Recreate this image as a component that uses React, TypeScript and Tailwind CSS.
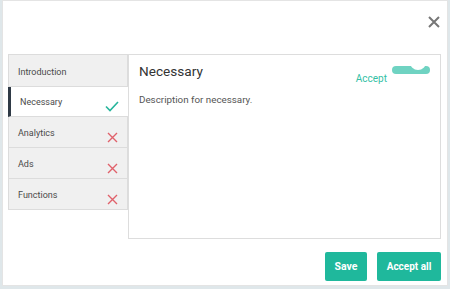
import { useState } from 'react';

const sections = [
  { name: 'Introduction', state: 'none' },
  { name: 'Necessary', state: 'on' },
  { name: 'Analytics', state: 'off' },
  { name: 'Ads', state: 'off' },
  { name: 'Functions', state: 'off' },
];

function Check() {
  return (
    <svg width="14" height="11" viewBox="0 0 14 11" fill="none">
      <path d="M1 5.5l4 4L13 1" stroke="#26b59c" strokeWidth="1.6" />
    </svg>
  );
}

function Cross() {
  return (
    <svg width="11" height="11" viewBox="0 0 11 11" fill="none">
      <path d="M1 1l9 9M10 1l-9 9" stroke="#e0616b" strokeWidth="1.4" />
    </svg>
  );
}

export default function App() {
  const [active] = useState('Necessary');

  return (
    <div className="w-[450px] h-[289px] bg-[#dfe7ea] pl-[2px] pr-[2px] pb-[3px] font-['Roboto',sans-serif]">
      <div className="h-full bg-white border border-[#e4e4e4] flex flex-col pl-[5px] pr-[6px]">
        <div className="h-[53px] flex justify-end items-start pt-[15px] pr-[1px]">
          <svg width="12" height="12" viewBox="0 0 12 12" fill="none">
            <path d="M1 1l10 10M11 1L1 11" stroke="#777" strokeWidth="2" />
          </svg>
        </div>
        <div className="flex h-[185px]">
          <div className="w-[120px] flex flex-col">
            {sections.map((s) => {
              const isActive = s.name === active;
              return (
                <div
                  key={s.name}
                  className={
                    isActive
                      ? 'h-[30px] flex items-center justify-between bg-white border-l-[3px] border-l-[#2f3a46] border-b border-b-[#dcdcdc] pl-[9px] pr-[9px] pt-[3px]'
                      : 'h-[31px] flex items-center justify-between bg-[#f0f0f0] border border-[#dcdcdc] border-t-0 first:border-t first:h-[33px] pl-[9px] pr-[9px] pt-[4px]'
                  }
                >
                  <span className="text-[9px] text-[#4a4a4a]">{s.name}</span>
                  <span className="pt-[6px]">
                    {s.state === 'on' && <Check />}
                    {s.state === 'off' && <Cross />}
                  </span>
                </div>
              );
            })}
          </div>
          <div className="flex-1 border border-[#dddddd] px-[10px] pt-[6px]">
            <div className="flex justify-between items-start">
              <span className="text-[13.6px] text-[#333]">Necessary</span>
              <div className="flex items-start gap-[5px]">
                <span className="text-[10px] text-[#34bfa6] mt-[10px]">Accept</span>
                <svg width="38" height="10" viewBox="0 0 38 10" className="mt-[4px]">
                  <rect x="0" y="1" width="38" height="8" rx="4" fill="#6fd3c2" />
                  <circle cx="26" cy="-3" r="8" fill="white" />
                </svg>
              </div>
            </div>
            <p className="text-[9.8px] text-[#555] mt-[7px]">Description for necessary.</p>
          </div>
        </div>
        <div className="flex justify-end gap-[10px] pt-[13px]">
          <button className="h-[29px] w-[42px] rounded-[2px] bg-[#1fb89c] text-white text-[10.5px] font-bold">
            Save
          </button>
          <button className="h-[29px] w-[64px] rounded-[2px] bg-[#1fb89c] text-white text-[10px] font-bold">
            Accept all
          </button>
        </div>
      </div>
    </div>
  );
}
